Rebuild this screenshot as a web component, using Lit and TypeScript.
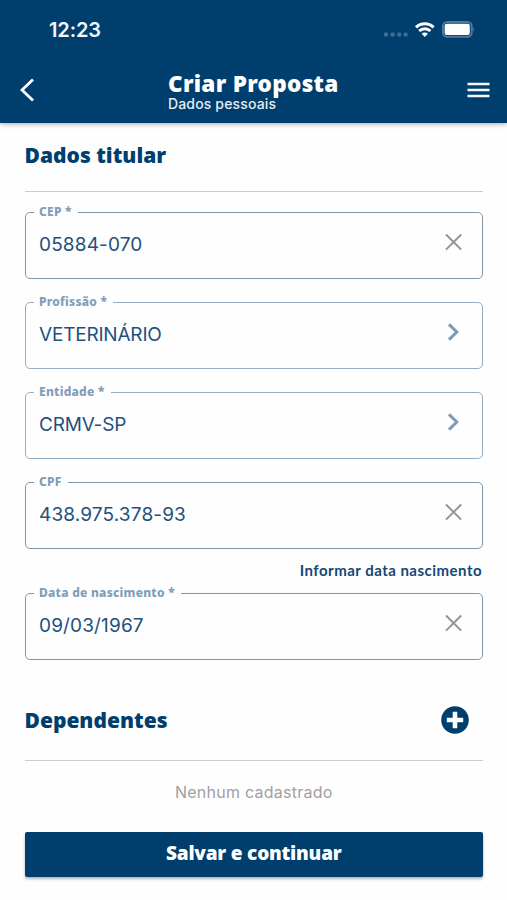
import { LitElement, html, css, svg } from "lit";
import { customElement, property } from "lit/decorators.js";

const clearIcon = svg`<path d="M2 1.5 17.2 16.7M17.2 1.5 2 16.7" fill="none" stroke="#929292" stroke-width="1.9"/>`;
const chevronIcon = svg`<path d="M5 1.4 12.8 9 5 16.6" fill="none" stroke="#7d9bb8" stroke-width="3"/>`;

@customElement("form-field")
export class FormField extends LitElement {
  @property() label = "";
  @property() value = "";
  @property() icon: "clear" | "next" = "clear";

  static styles = css`
    :host { display: block; height: 73px; }
    .box {
      box-sizing: border-box;
      height: 73px;
      margin: 0;
      min-width: 0;
      padding: 0 19.5px 0 13.5px;
      border: 1.5px solid #8297a6;
      border-radius: 5px;
    }
    .box.next { border-color: #92adc6; }
    .legend {
      margin-left: -5px;
      padding: 0 6px 2px 5px;
      height: 12px;
      font: 800 12px/12px "Noto Sans", sans-serif;
      letter-spacing: 0.25px;
      color: #819db7;
      white-space: nowrap;
    }
    .row { display: flex; align-items: center; justify-content: space-between; height: 50px; }
    .value { font: 400 19px/24px Inter, sans-serif; color: #1f517d; letter-spacing: 0.15px; }
    .next .value { letter-spacing: -0.2px; }
    .icon { width: 19px; height: 19px; display: block; margin-bottom: 4px; }
  `;

  render() {
    return html`<fieldset class="box ${this.icon}">
      <legend class="legend">${this.label}</legend>
      <div class="row">
        <span class="value">${this.value}</span>
        <svg class="icon" viewBox="0 0 19 19">${this.icon === "clear" ? clearIcon : chevronIcon}</svg>
      </div>
    </fieldset>`;
  }
}

@customElement("app-root")
export class AppRoot extends LitElement {
  static styles = css`
    :host {
      display: flex;
      flex-direction: column;
      height: 900px;
      background: #fefefe;
      color: #003e6e;
      font-family: Inter, sans-serif;
      overflow: hidden;
    }
    .top { height: 122.5px; flex: none; background: #003e6e; color: #fff; box-shadow: 0 1px 5px rgba(0, 0, 0, 0.35); }
    .status { height: 60px; display: flex; align-items: center; justify-content: space-between; padding: 0 32px 0 49px; }
    .time { font: 600 20px/24px Inter, sans-serif; color: #f2f7fb; letter-spacing: -0.1px; }
    .indicators { display: block; }
    .nav { height: 60px; display: grid; grid-template-columns: 168px 1fr 40px; align-items: center; }
    .back { margin-left: 19px; display: block; }
    .title { font: 900 22.5px/24px "Noto Sans", sans-serif; letter-spacing: 0.3px; margin: 0; white-space: nowrap; }
    .subtitle { font: 500 14px/16px Inter, sans-serif; letter-spacing: 0.15px; color: #e5edf3; }
    .titles { display: flex; flex-direction: column; padding-top: 4px; }
    .content { padding: 0 24px 0 24.5px; display: flex; flex-direction: column; }
    .heading { font: 900 21px/26px "Noto Sans", sans-serif; margin: 0; white-space: nowrap; }
    .section { height: 69px; box-sizing: border-box; padding-top: 19.5px; border-bottom: 1.5px solid #c5cbcf; }
    .fields { display: flex; flex-direction: column; gap: 17px; padding-top: 14px; }
    .link { align-self: flex-end; font: 700 15px/20px Lato, sans-serif; letter-spacing: 0.48px; color: #144775; height: 20px; margin: -6px 1px -16px 0; padding-bottom: 6px; white-space: nowrap; }
    .deps { height: 101.5px; box-sizing: border-box; padding: 21px 14px 0 0; display: flex; justify-content: space-between; align-items: center; border-bottom: 1.5px solid #c9d0d4; }
    .add { display: block; }
    .empty { margin: 20px 0 0; text-align: center; font: 400 16px/22px Inter, sans-serif; letter-spacing: 0.25px; color: #a0a0a0; }
    .save {
      margin-top: 29px;
      height: 45px;
      padding: 0 0 3px;
      border: 0;
      border-radius: 2px;
      background: #003e6e;
      color: #fff;
      font: 900 19px/24px "Noto Sans", sans-serif;
      letter-spacing: -0.2px;
      box-shadow: 0 2px 3px rgba(0, 0, 0, 0.3);
    }
  `;

  render() {
    return html`
      <header class="top">
        <div class="status">
          <span class="time">12:23</span>
          <svg class="indicators" width="92" height="20" viewBox="383 20 92 20">
            <g fill="#3e6c92">
              <rect x="384" y="32.5" width="4" height="4" rx="1.2"/><rect x="390.6" y="32.5" width="4" height="4" rx="1.2"/>
              <rect x="397.2" y="32.5" width="4" height="4" rx="1.2"/><rect x="403.6" y="32.5" width="4" height="4" rx="1.2"/>
            </g>
            <g fill="none" stroke="#fff" stroke-width="3">
              <path d="M416 27.3a12.7 12.7 0 0 1 17.6 0"/>
              <path d="M419.2 31a8 8 0 0 1 11.2 0"/>
            </g>
            <path d="M421.7 33.8a4.4 4.4 0 0 1 6.2 0L424.8 37z" fill="#fff"/>
            <rect x="442.9" y="22.1" width="28.8" height="14.6" rx="4.2" fill="#003e6e" stroke="#507a9c" stroke-width="2"/>
            <rect x="444.6" y="23.8" width="25.2" height="11.2" rx="2" fill="#fff"/>
            <path d="M473 27.2q2.2 2.2 0 4.6z" fill="#507a9c"/>
          </svg>
        </div>
        <div class="nav">
          <svg class="back" width="16" height="24" viewBox="0 0 16 24"><path d="M14 1.5 3 12 14 22.5" fill="none" stroke="#fff" stroke-width="2.8"/></svg>
          <div class="titles">
            <h1 class="title">Criar Proposta</h1>
            <span class="subtitle">Dados pessoais</span>
          </div>
          <svg width="23" height="16" viewBox="0 0 23 16"><path d="M.5 2h22M.5 8h22M.5 14h22" stroke="#f4f8fb" stroke-width="2.3"/></svg>
        </div>
      </header>
      <main class="content">
        <div class="section"><h2 class="heading">Dados titular</h2></div>
        <div class="fields">
          <form-field label="CEP *" value="05884-070"></form-field>
          <form-field label="Profissão *" value="VETERINÁRIO" icon="next"></form-field>
          <form-field label="Entidade *" value="CRMV-SP" icon="next"></form-field>
          <form-field label="CPF" value="438.975.378-93"></form-field>
          <span class="link">Informar data nascimento</span>
          <form-field label="Data de nascimento *" value="09/03/1967"></form-field>
        </div>
        <div class="deps">
          <h2 class="heading">Dependentes</h2>
          <svg class="add" width="28" height="28" viewBox="0 0 28 28"><circle cx="14" cy="14" r="13.8" fill="#003e6e"/><path d="M14 5.8v16.4M5.8 14h16.4" stroke="#fff" stroke-width="4.6"/></svg>
        </div>
        <p class="empty">Nenhum cadastrado</p>
        <button class="save">Salvar e continuar</button>
      </main>
    `;
  }
}
